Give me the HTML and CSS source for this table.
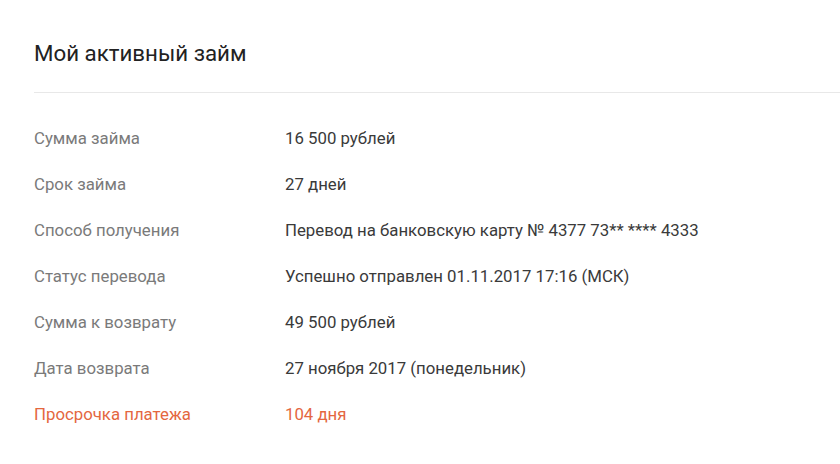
FILE: index.html
```html
<!DOCTYPE html>
<html lang="ru">
<head>
<meta charset="utf-8">
<link rel="stylesheet" href="styles.css">
</head>
<body>
<div class="card">
  <h1 class="title">Мой активный займ</h1>
  <div class="divider"></div>
  <div class="rows">
    <div class="row"><span class="label">Сумма займа</span><span class="value">16 500 рублей</span></div>
    <div class="row"><span class="label">Срок займа</span><span class="value">27 дней</span></div>
    <div class="row"><span class="label">Способ получения</span><span class="value">Перевод на банковскую карту № 4377 73** **** 4333</span></div>
    <div class="row"><span class="label">Статус перевода</span><span class="value">Успешно отправлен 01.11.2017 17:16 (МСК)</span></div>
    <div class="row"><span class="label">Сумма к возврату</span><span class="value">49 500 рублей</span></div>
    <div class="row"><span class="label">Дата возврата</span><span class="value">27 ноября 2017 (понедельник)</span></div>
    <div class="row overdue"><span class="label">Просрочка платежа</span><span class="value">104 дня</span></div>
  </div>
</div>
</body>
</html>
```

FILE: styles.css
```css
html, body {
  margin: 0;
  padding: 0;
  background: #fff;
}
body {
  font-family: Roboto, "Noto Sans", sans-serif;
  color: #333;
}
.card {
  padding-left: 34px;
}
.title {
  margin: 0;
  padding-top: 39px;
  font-size: 22.3px;
  line-height: 28px;
  font-weight: 400;
  color: #222;
}
.divider {
  margin-top: 25px;
  height: 1px;
  background: #e8e8e8;
}
.rows {
  display: flex;
  flex-direction: column;
  padding-top: 34px;
}
.row {
  display: grid;
  grid-template-columns: 251px 1fr;
  height: 46px;
  line-height: 22px;
  font-size: 16.8px;
}
.label {
  color: #7a7a7a;
}
.value {
  color: #3a3a3a;
}
.overdue .label, .overdue .value {
  color: #e4673f;
}
```
